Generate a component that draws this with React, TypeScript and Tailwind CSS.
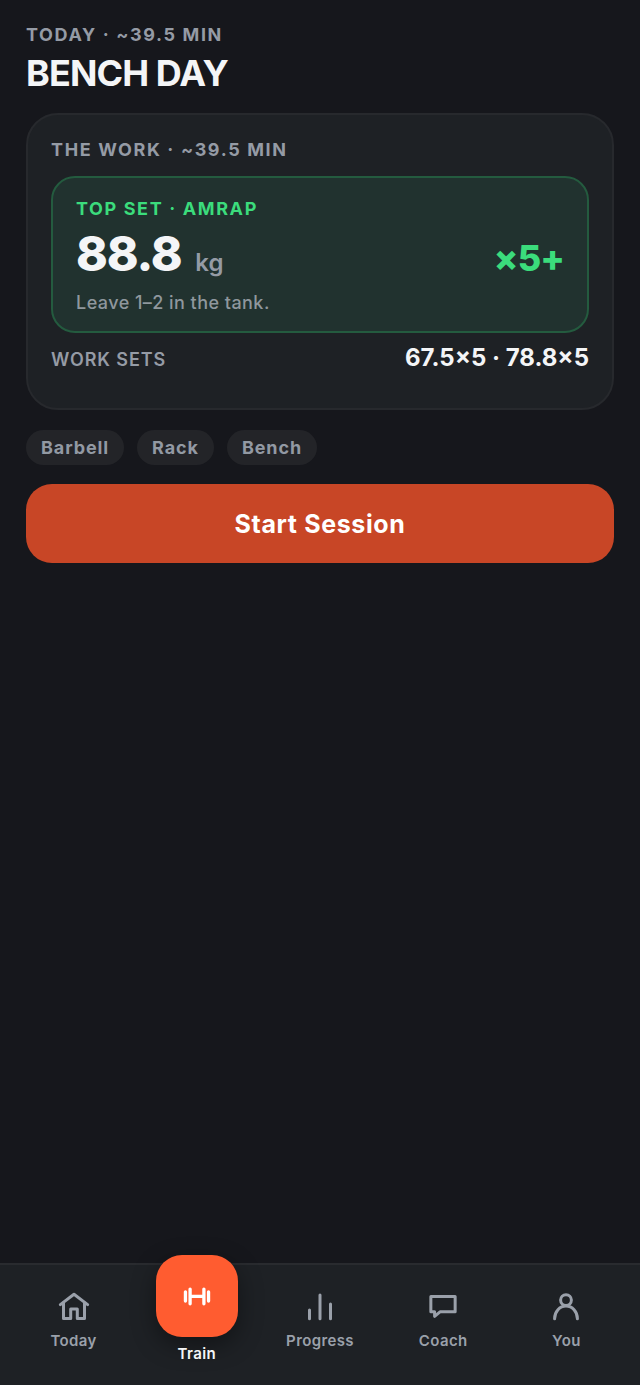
import type { ReactNode } from "react";

const equipment = ["Barbell", "Rack", "Bench"];

const icons: Record<string, ReactNode> = {
  Today: (
    <>
      <path d="M2.9 10.4L12 3.5l9.1 6.9" />
      <path d="M5 9.2v10.5h4.8v-6.3h4.4v6.3H19V9.2" />
    </>
  ),
  Progress: <path d="M5 14v5.8M12 4v15.8M19 10v9.8" />,
  Coach: <path d="M3.9 5h16.2v10.2H10l-3.6 3v-3H3.9z" />,
  You: (
    <>
      <circle cx="12" cy="7.4" r="3.6" />
      <path d="M4.4 19.8a7.6 8.4 0 0 1 15.2 0" />
    </>
  ),
};

function NavItem({ label }: { label: string }) {
  return (
    <a href="#" className="flex flex-1 flex-col items-center pt-6 text-[#9aa0aa]">
      <svg
        viewBox="0 0 24 24"
        className="size-9"
        fill="none"
        stroke="currentColor"
        strokeWidth="2"
        strokeLinecap="round"
        strokeLinejoin="round"
      >
        {icons[label]}
      </svg>
      <span className="mt-1 text-[15px] leading-6 font-semibold tracking-wide">{label}</span>
    </a>
  );
}

export default function App() {
  return (
    <div className="flex min-h-screen flex-col bg-[#16171c] font-['Inter',sans-serif] text-[#f4f5f7]">
      <main className="flex-1 px-[26px] pt-6">
        <p className="text-lg leading-[22px] font-bold tracking-[0.09em] text-[#959ba5]">TODAY · ~39.5 MIN</p>
        <h1 className="mt-[7px] text-4xl leading-10 font-bold tracking-tight">BENCH DAY</h1>

        <section className="mt-5 rounded-[32px] border-2 border-[#27292d] bg-[#1e2125] px-[23px] pt-6 pb-[33px]">
          <h2 className="text-lg leading-[22px] font-bold tracking-[0.09em] text-[#959ba5]">THE WORK · ~39.5 MIN</h2>

          <div className="mt-[15px] rounded-3xl border-2 border-[#245b3f] bg-[#21322f] px-[23px] pt-5 pb-[17px]">
            <p className="text-lg leading-[22px] font-bold tracking-[0.09em] text-[#3bdc7c]">TOP SET · AMRAP</p>
            <div className="mt-1.5 flex items-baseline justify-between leading-[56px]">
              <p className="flex items-baseline gap-3.5">
                <span className="text-5xl leading-[56px] font-extrabold tracking-tight">88.8</span>
                <span className="text-2xl font-semibold text-[#959ba5]">kg</span>
              </p>
              <p className="text-4xl font-extrabold tracking-tight text-[#3bdc7c]">×5+</p>
            </div>
            <p className="mt-2.5 text-lg leading-[22px] font-medium tracking-wide text-[#8f979d]">
              Leave 1–2 in the tank.
            </p>
          </div>

          <div className="mt-2.5 flex items-baseline justify-between">
            <span className="text-lg leading-[30px] font-semibold tracking-wider text-[#959ba5]">WORK SETS</span>
            <span className="text-2xl leading-[30px] font-bold">67.5×5 · 78.8×5</span>
          </div>
        </section>

        <ul className="mt-5 flex gap-[13px]">
          {equipment.map((name) => (
            <li
              key={name}
              className="rounded-full bg-[#232428] px-[15px] py-1.5 text-lg leading-[23px] font-bold tracking-wider text-[#9299a3]"
            >
              {name}
            </li>
          ))}
        </ul>

        <button
          type="button"
          className="mt-[19px] h-[79px] w-full rounded-[26px] bg-[#c84626] pt-0.5 text-[25px] font-bold tracking-wide text-white"
        >
          Start Session
        </button>
      </main>

      <nav className="flex h-[122px] border-t-2 border-[#292b2f] bg-[#1e2125] px-3">
        <NavItem label="Today" />
        <a href="#" className="-mt-2.5 flex flex-1 flex-col items-center">
          <span className="flex size-[82px] items-center justify-center rounded-[26px] bg-[#ff5c30] shadow-[0_8px_24px_rgba(0,0,0,0.4)]">
            <svg
              viewBox="0 0 24 24"
              className="size-9"
              fill="none"
              stroke="white"
              strokeWidth="2.2"
              strokeLinecap="round"
            >
              <path d="M4.3 9.2v6.2M7.4 7.4v9.8M16.6 7.4v9.8M19.7 9.2v6.2M7.4 12.3h9.2" />
            </svg>
          </span>
          <span className="mt-[5px] text-[15px] leading-6 font-semibold tracking-wide">Train</span>
        </a>
        <NavItem label="Progress" />
        <NavItem label="Coach" />
        <NavItem label="You" />
      </nav>
    </div>
  );
}
